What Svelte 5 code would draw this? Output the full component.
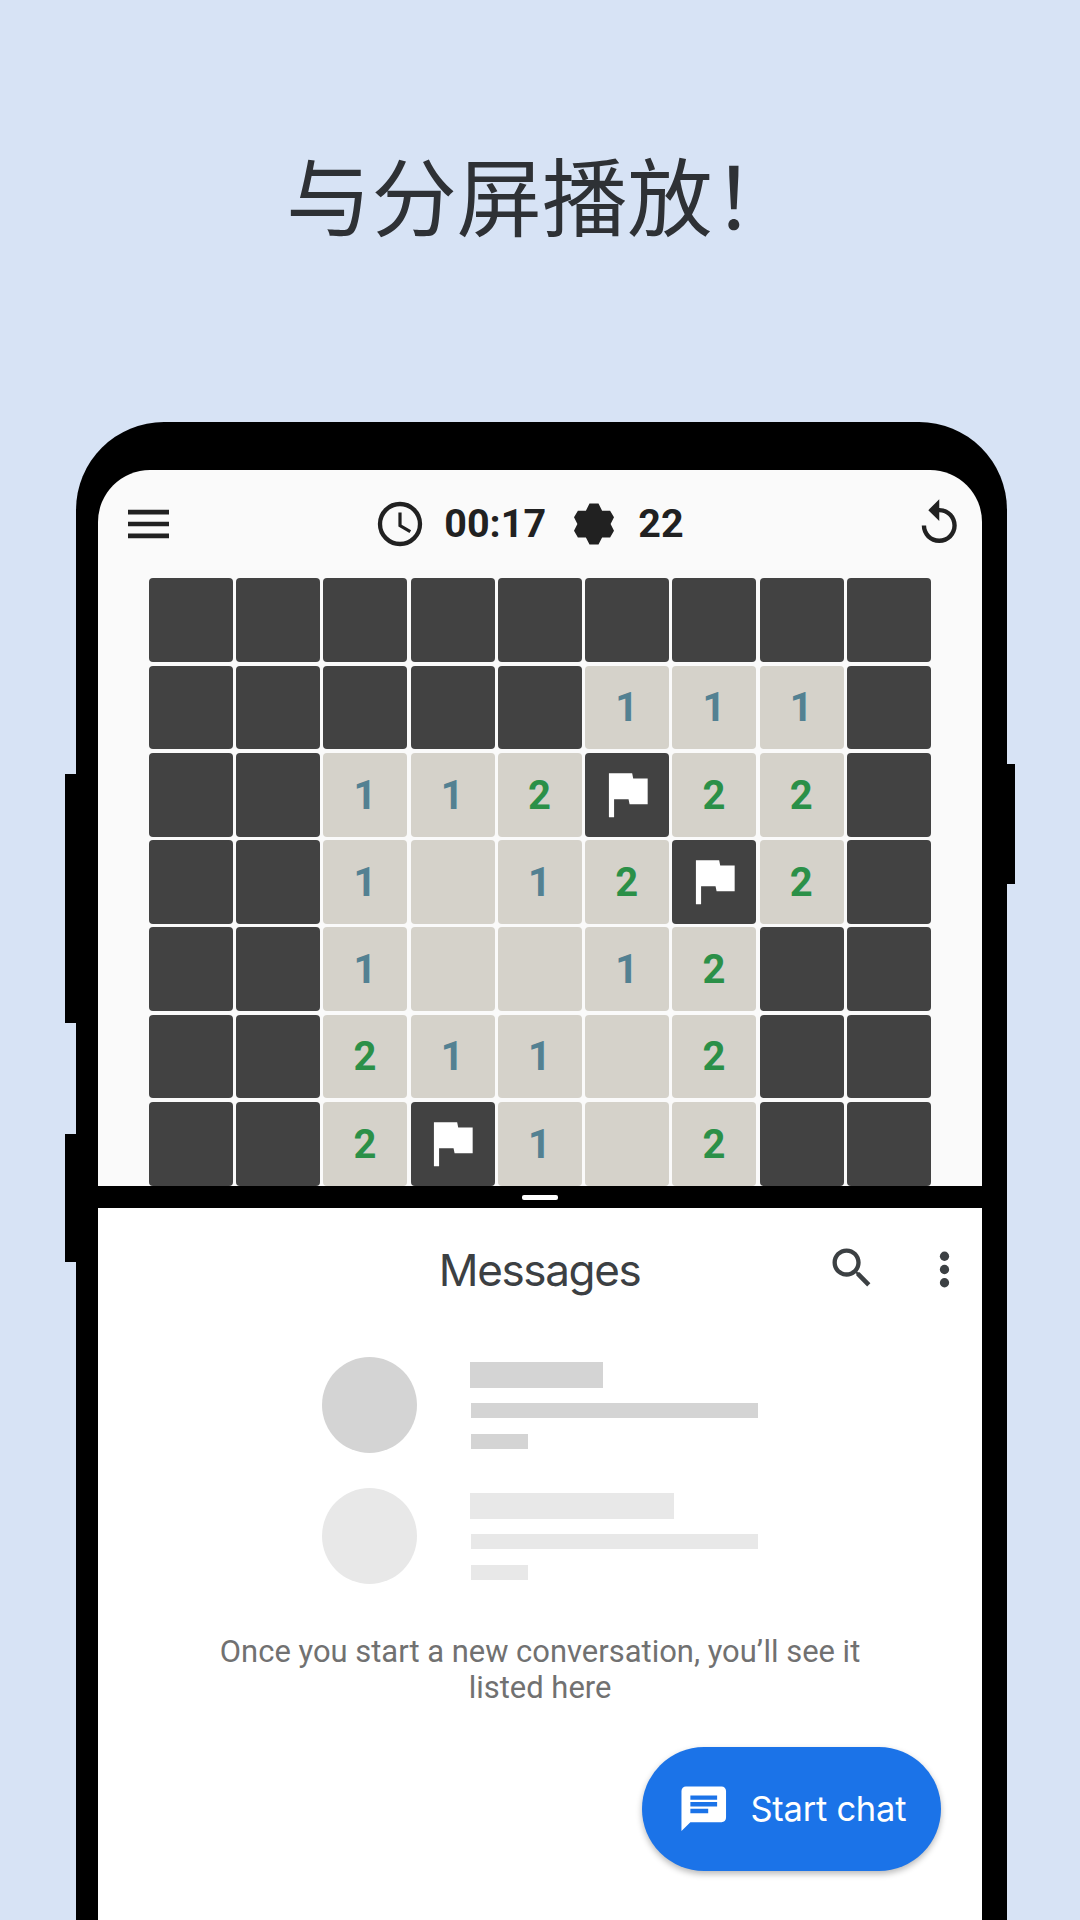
<script>
  const rows = [
    '#########',
    '#####111#',
    '##112F22#',
    '##1.12F2#',
    '##1..12##',
    '##211.2##',
    '##2F1.2##'
  ];
  const cells = rows.flatMap((r) => [...r]);
</script>

<main class="page">
  <h1>与分屏播放！</h1>

  <div class="phone">
    <i class="key vol"></i>
    <i class="key assist"></i>
    <i class="key power"></i>

    <section class="game">
      <header class="bar">
        <svg class="menu" viewBox="0 0 42 30"><path d="M0 .8h41v4.6H0zM0 12.7h41v4.6H0zM0 24.6h41v4.6H0z" /></svg>
        <div class="stats">
          <svg class="clock" viewBox="0 0 46 46">
            <circle cx="23" cy="23" r="20" />
            <path d="M23 11.6V24.6L33.3 30.6" />
          </svg>
          <span class="time">00:17</span>
          <svg class="mine" viewBox="0 0 40 42">
            <path d="M15.5.5h9l3.6 7.2h8L40 14.3 36.6 21 40 27.8 36.1 34.5h-8L24.5 41.5h-9L11.9 34.5h-8L0 27.8 3.4 21 0 14.3 3.9 7.7h8z" />
          </svg>
          <span class="left">22</span>
        </div>
        <svg class="replay" viewBox="0 0 24 24"><path d="M12 5V1L7 6l5 5V7c3.31 0 6 2.69 6 6s-2.69 6-6 6-6-2.69-6-6H4c0 4.42 3.58 8 8 8s8-3.58 8-8-3.58-8-8-8z" /></svg>
      </header>

      <div class="board">
        {#each cells as c}
          <div class="cell" class:closed={c === '#' || c === 'F'} class:one={c === '1'} class:two={c === '2'}>
            {#if c === 'F'}
              <svg viewBox="0 0 24 24"><path d="M14.4 6L14 4H5v17h2v-7h5.6l.4 2h7V6z" /></svg>
            {:else if c === '1' || c === '2'}
              <span>{c}</span>
            {/if}
          </div>
        {/each}
      </div>
    </section>

    <div class="divider"><i></i></div>

    <section class="messages">
      <header class="mbar">
        <h2>Messages</h2>
        <div class="actions">
          <svg class="search" viewBox="0 0 24 24"><path d="M15.5 14h-.79l-.28-.27C15.41 12.59 16 11.11 16 9.5 16 5.91 13.09 3 9.5 3S3 5.91 3 9.5 5.91 16 9.5 16c1.61 0 3.09-.59 4.23-1.57l.27.28v.79l5 4.99L20.49 19l-4.99-5zm-6 0C7.01 14 5 11.99 5 9.5S7.01 5 9.5 5 14 7.01 14 9.5 11.99 14 9.5 14z" /></svg>
          <svg class="more" viewBox="0 0 24 24"><circle cx="12" cy="6" r="2.1" /><circle cx="12" cy="12" r="2.1" /><circle cx="12" cy="18" r="2.1" /></svg>
        </div>
      </header>

      <div class="skeletons">
        {#each ['dark', 'light'] as tone}
          <div class="skeleton {tone}">
            <i class="avatar"></i>
            <div class="lines"><i class="name"></i><i class="long"></i><i class="short"></i></div>
          </div>
        {/each}
      </div>

      <p>Once you start a new conversation, you’ll see it<br />listed here</p>

      <button class="fab">
        <svg viewBox="0 0 24 24"><path d="M20 2H4c-1.1 0-1.99.9-1.99 2L2 22l4-4h14c1.1 0 2-.9 2-2V4c0-1.1-.9-2-2-2zM6 9h12v2H6V9zm8 5H6v-2h8v2zm4-6H6V6h12v2z" /></svg>
        <span>Start chat</span>
      </button>
    </section>
  </div>
</main>

<style>
  :global(body) { margin: 0; background: #d7e3f5; }
  * { box-sizing: border-box; }
  .page {
    width: 1080px;
    height: 1920px;
    overflow: hidden;
    background: #d7e3f5;
    display: flex;
    flex-direction: column;
    align-items: center;
    font-family: Roboto, 'Noto Sans CJK SC', sans-serif;
  }
  h1 {
    margin: 131px 0 0 4px;
    height: 291.4px;
    font: 400 85.3px/124px 'Noto Sans CJK SC', sans-serif;
    color: #2e3135;
    white-space: nowrap;
  }
  .phone {
    position: relative;
    width: 931px;
    height: 1497.6px;
    margin-left: 3px;
    padding: 47.6px 24.6px 0 21.7px;
    background: #000;
    border-radius: 88px 88px 0 0;
    flex: none;
  }
  .key { position: absolute; background: #000; width: 12px; }
  .vol { left: -11px; top: 352px; height: 248.5px; }
  .assist { left: -11px; top: 712px; height: 127.5px; }
  .power { right: -8px; top: 341.5px; height: 120px; }
  .game {
    height: 716px;
    background: #fafafa;
    border-radius: 52px 52px 0 0;
    overflow: hidden;
    color: #212121;
  }
  .bar {
    height: 108.3px;
    padding: 0 16.5px 0 30.3px;
    display: grid;
    grid-template-columns: 249.3px 1fr auto;
    align-items: center;
  }
  svg { display: block; flex: none; fill: currentColor; }
  .menu { width: 42px; height: 30px; }
  .stats {
    display: flex;
    align-items: center;
    font-weight: 700;
    font-size: 39.5px;
    line-height: 48px;
  }
  .clock { width: 46px; height: 46px; margin-top: -1px; fill: none; stroke: currentColor; stroke-width: 4.3; }
  .clock path { stroke-width: 3.2; }
  .time { margin: 0 29px 0 21px; width: 101px; }
  .mine { width: 40px; height: 42px; margin-top: -1px; }
  .left { margin: 0 0 0 24px; }
  .replay { width: 52.5px; height: 52.5px; margin-top: -1px; }
  .board {
    margin-left: 51.3px;
    display: grid;
    grid-template-columns: repeat(9, 83.8px);
    grid-auto-rows: 83.8px;
    gap: 3.46px;
  }
  .cell {
    border-radius: 4px;
    background: #d5d2ca;
    display: flex;
    align-items: center;
    justify-content: center;
    font-weight: 700;
    font-size: 40px;
    line-height: 48px;
  }
  .cell span { padding: 2px 1px 0 0; }
  .closed { background: #424242; color: #fff; }
  .cell svg { width: 62px; height: 62px; margin: -1px 1px 0 0; }
  .one { color: #538192; }
  .two { color: #2b9048; }
  .divider { height: 22px; display: flex; justify-content: center; padding-top: 9px; }
  .divider i { width: 36px; height: 5px; border-radius: 2px; background: #fff; }
  .messages {
    height: 712px;
    background: #fff;
    display: flex;
    flex-direction: column;
    align-items: center;
    color: #3c4043;
  }
  .mbar {
    width: 100%;
    height: 122px;
    padding-right: 11px;
    display: grid;
    grid-template-columns: 1fr auto 1fr;
    align-items: center;
  }
  h2 { grid-column: 2; margin: 2px 0 0 10px; font: 400 44px/56px Inter, sans-serif; letter-spacing: -1.35px; }
  .actions { display: flex; justify-content: flex-end; gap: 40.5px; }
  .search { width: 52px; height: 52px; }
  .more { width: 53px; height: 53px; margin-top: 1px; }
  .skeletons { display: grid; gap: 35px; margin-top: 27px; width: 436px; }
  .skeleton { display: flex; gap: 53px; height: 96px; color: #d4d4d4; }
  .skeleton.light { color: #e8e8e8; }
  .skeleton i { display: block; background: currentColor; }
  .avatar { width: 95px; height: 96px; border-radius: 50%; }
  .lines { padding-top: 4.6px; }
  .name { width: 133px; height: 26px; }
  .light .name { width: 203.5px; }
  .long { width: 287px; height: 15px; margin: 15.7px 0 16px 1px; }
  .short { width: 57px; height: 15px; margin-left: 1px; }
  p { margin: 50px 0 0; font-size: 30.95px; line-height: 36px; color: #717171; text-align: center; white-space: nowrap; }
  .fab {
    align-self: flex-end;
    margin: 41px 41.9px 0 0;
    width: 298.6px;
    height: 124px;
    padding: 0 0 0 35px;
    border: 0;
    border-radius: 62px;
    background: #1b73e8;
    color: #fff;
    display: flex;
    align-items: center;
    gap: 20px;
    font: 400 34.5px/44px Inter, sans-serif;
    letter-spacing: -.25px;
    white-space: nowrap;
    box-shadow: 0 3px 6px rgb(0 0 0 / .28);
  }
  .fab svg { width: 53.5px; height: 53.5px; }
</style>
